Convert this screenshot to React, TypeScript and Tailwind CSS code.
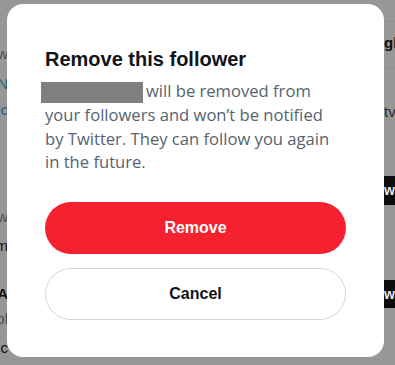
import React from 'react';

const font = { fontFamily: '"Liberation Sans", Arial, sans-serif' };

const App: React.FC = () => {
  return (
    <div className="relative w-[395px] h-[365px] overflow-hidden bg-[#979797]" style={font}>
      {/* page underneath the overlay */}
      <div className="flex justify-between h-full">
        <div className="w-[8px] overflow-hidden text-[15px] leading-none whitespace-nowrap flex flex-col items-end">
          <span className="mt-[46px] text-[#4d4d4d]">w</span>
          <span className="mt-[15px] text-[#2b5d7e]">N</span>
          <span className="mt-[11px] text-[#2b5d7e]">c</span>
          <span className="mt-[92px] text-[#4d4d4d]">w</span>
          <span className="mt-[14px] text-[#121212]">m</span>
          <span className="mt-[33px] text-[#121212] font-bold">A</span>
          <span className="mt-[10px] text-[#4d4d4d]">ol</span>
          <span className="mt-[14px] text-[#121212]">c</span>
          <span className="mt-[11px] text-[#2b5d7e]">ency.co</span>
        </div>
        <div className="w-[11px] flex flex-col">
          <div className="mt-[21px] border-t border-[#8e8e8e]" />
          <span className="mt-[13px] text-[15px] leading-none font-bold text-[#111] whitespace-nowrap">gh</span>
          <div className="mt-[17px] border-t border-[#8e8e8e]" />
          <span className="mt-[36px] text-[15px] leading-none text-[#2a2a2a] whitespace-nowrap">tv</span>
          <div className="mt-[57px] h-[29px] bg-[#0c0c0c] text-[#e6e6e6] font-bold text-[14px] flex items-center">w</div>
          <div className="mt-[75px] h-[28px] bg-[#0c0c0c] text-[#e6e6e6] font-bold text-[14px] flex items-center">w</div>
        </div>
      </div>

      {/* dialog */}
      <div className="absolute left-[7px] top-[4px] w-[377px] h-[353px] rounded-[16px] bg-white px-[38px] pt-[43px]">
        <h2 className="text-[20px] leading-[24px] font-bold text-[#0f1419]">Remove this follower</h2>
        <p
          className="mt-[8px] text-[16.6px] leading-[23.5px] text-[#536471] whitespace-nowrap"
          style={{ fontFamily: '"Open Sans", "Noto Sans", sans-serif' }}
        >
          <span className="inline-block align-middle -ml-[4px] mr-[3px] w-[102px] h-[21px] bg-[#808080]" />
          will be removed from
          <br />
          your followers and won’t be notified
          <br />
          by Twitter. They can follow you again
          <br />
          in the future.
        </p>
        <div className="mt-[28px] flex flex-col gap-[14px]">
          <button className="h-[52px] w-full rounded-full bg-[#f4212e] text-white text-[16px] font-bold">Remove</button>
          <button className="h-[52px] w-full rounded-full border border-[#cfd9de] bg-white text-[#0f1419] text-[16px] font-bold">Cancel</button>
        </div>
      </div>
    </div>
  );
};

export default App;
